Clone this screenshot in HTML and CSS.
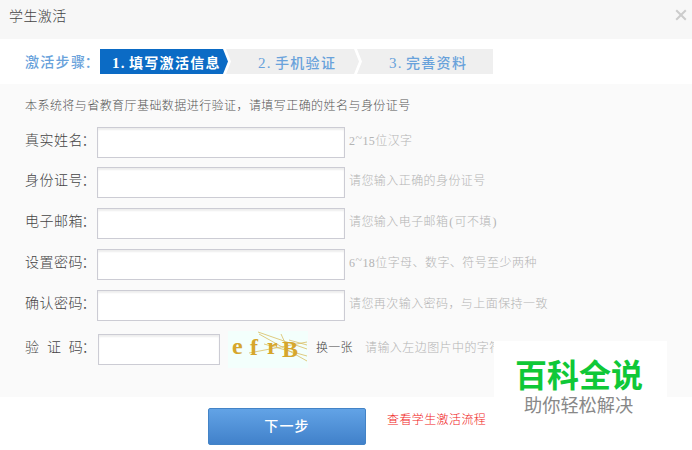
FILE: index.html
```html
<!DOCTYPE html>
<html lang="zh-CN">
<head>
  <meta charset="UTF-8" />
  <title>学生激活</title>
  <link rel="stylesheet" href="styles.css">
</head>
<body>

  <div class="header">
    <span class="title">学生激活</span>
    <svg class="close" width="12" height="12" viewBox="0 0 12 12"><path d="M1.2 1.2L10.8 10.8M10.8 1.2L1.2 10.8" /></svg>
  </div>

  <!-- 步骤 -->
  <div class="steps">
    <span class="steps-label">激活步骤<span class="colon">：</span></span>
    <div class="step step-active"><span class="num">1.</span>填写激活信息</div>
    <div class="step step-second"><span class="num">2.</span>手机验证</div>
    <div class="step step-last"><span class="num">3.</span>完善资料</div>
  </div>

  <!-- 表单 -->
  <form class="form">
    <p class="note">本系统将与省教育厅基础数据进行验证，请填写正确的姓名与身份证号</p>
    <div class="row">
      <label for="name">真实姓名<span class="colon">：</span></label>
      <input id="name" type="text" />
      <span class="hint">2<span class="tilde">~</span>15位汉字</span>
    </div>
    <div class="row">
      <label for="idcard">身份证号<span class="colon">：</span></label>
      <input id="idcard" type="text" />
      <span class="hint">请您输入正确的身份证号</span>
    </div>
    <div class="row">
      <label for="email">电子邮箱<span class="colon">：</span></label>
      <input id="email" type="text" />
      <span class="hint">请您输入电子邮箱<span class="paren">(</span>可不填<span class="paren">)</span></span>
    </div>
    <div class="row">
      <label for="pwd">设置密码<span class="colon">：</span></label>
      <input id="pwd" type="password" />
      <span class="hint">6<span class="tilde">~</span>18位字母、数字、符号至少两种</span>
    </div>
    <div class="row">
      <label for="pwd2">确认密码<span class="colon">：</span></label>
      <input id="pwd2" type="password" />
      <span class="hint">请您再次输入密码，与上面保持一致</span>
    </div>
    <div class="row row-code">
      <label for="code">验 证 码<span class="colon">：</span></label>
      <input id="code" type="text" />
      <svg class="captcha" width="80" height="37" viewBox="0 0 80 37">
        <rect width="80" height="37" fill="#f3fffc" />
        <path class="captcha-line" d="M30 1L79 18M31 3L79 30M53 3L58 14M21 22L79 11M36 13L79 25M61 9L79 14" />
        <g class="captcha-text">
          <text x="4" y="23">e</text>
          <text x="22" y="24">f</text>
          <text x="39" y="23">r</text>
          <text x="54" y="26">B</text>
        </g>
      </svg>
      <span class="change">换一张</span>
      <span class="hint">请输入左边图片中的字符</span>
    </div>
  </form>

  <div class="footer">
    <button class="next" type="button">下一步</button>
    <a class="flow">查看学生激活流程</a>
  </div>

  <div class="badge">
    <div class="badge-name">百科全说</div>
    <div class="badge-sub">助你轻松解决</div>
  </div>

</body>
</html>
```
FILE: styles.css
```css
* {
  box-sizing: border-box;
}

body {
  margin: 0;
  width: 692px;
  height: 450px;
  overflow: hidden;
  position: relative;
  background: #fff;
  color: #444;
  font-family: "Liberation Serif", "Noto Sans CJK SC", serif;
  font-size: 12px;
  font-weight: 300;
}

.header {
  display: flex;
  justify-content: space-between;
  height: 39px;
  padding: 6px 5px 0 9px;
  background: #f7f7f7;
}

.title {
  font-size: 14px;
  letter-spacing: 0.4px;
  line-height: 22px;
}

.close {
  margin-top: 3px;
  fill: none;
  stroke: #ccc;
  stroke-width: 2;
}

/* 步骤条 */
.steps {
  display: flex;
  height: 45px;
  padding: 10px 0 0 25px;
  color: #69a2db;
  font-size: 14px;
  font-weight: bold;
  letter-spacing: 1.3px;
  line-height: 28px;
}

.steps-label {
  width: 75px;
  white-space: nowrap;
  font-weight: 500;
}

.colon {
  margin-left: -1.5px;
}

.step {
  height: 25px;
  background: #efefef;
  white-space: nowrap;
}

.num {
  display: inline-block;
  width: 17px;
  font-size: 15px;
}

.step-active {
  width: 128px;
  padding-left: 12px;
  background: #0b6bc5;
  color: #fff;
  clip-path: polygon(0 0, 123px 0, 128px 50%, 123px 100%, 0 100%);
}

.step-second {
  width: 133px;
  margin-left: -2px;
  padding-left: 32px;
  font-weight: 500;
  clip-path: polygon(0 0, 128px 0, 133px 50%, 128px 100%, 0 100%, 5px 50%);
}

.step-last {
  width: 136px;
  margin-left: -2px;
  padding-left: 32px;
  font-weight: 500;
  clip-path: polygon(0 0, 100% 0, 100% 100%, 0 100%, 5px 50%);
}

/* 表单 */
.form {
  height: 313px;
  padding: 12px 0 0 25px;
  background: #fafafa;
}

.note {
  height: 30.6px;
  margin: 0;
  color: #555;
  letter-spacing: 0.44px;
  line-height: 21px;
}

.row {
  display: flex;
  height: 30.8px;
  margin-bottom: 10px;
}

.row label {
  width: 72px;
  font-size: 14px;
  letter-spacing: 0.5px;
  line-height: 28px;
  white-space: nowrap;
}

.row input {
  width: 248px;
  height: 31px;
  border: 1px solid #ccccd4;
  background: #fff;
  box-shadow: inset 0 2px 2px #eee;
}

.hint {
  margin-left: 4px;
  color: #b4b4b4;
  letter-spacing: 0.43px;
  line-height: 29px;
  white-space: nowrap;
}

.tilde {
  position: relative;
  top: -3px;
}

.paren {
  display: inline-block;
  width: 6px;
  text-align: center;
}

.row-code {
  margin-top: 13.4px;
}

.row-code label {
  width: 73px;
  word-spacing: 3.4px;
}

.row-code input {
  width: 122px;
}

.captcha {
  margin: -3px 0 0 8px;
}

.captcha-text {
  fill: #d6a62c;
  font-family: "Liberation Serif", serif;
  font-size: 24px;
  font-weight: bold;
}

.captcha-line {
  fill: none;
  stroke: #d9bd60;
  stroke-width: 0.8;
}

.change {
  width: 45px;
  margin-left: 8px;
  letter-spacing: 0.3px;
  line-height: 29px;
}

/* 底部 */
.footer {
  display: flex;
  height: 53px;
  padding: 11px 0 0 208px;
}

.next {
  width: 158px;
  height: 37px;
  padding: 0;
  border: 1px solid #4383c6;
  border-radius: 2px;
  background: linear-gradient(#62a3e6, #4181ca);
  color: #fff;
  font-family: inherit;
  font-size: 14px;
  font-weight: 500;
  letter-spacing: 1.2px;
  line-height: 35px;
}

.flow {
  margin-left: 21px;
  color: #f01818;
  letter-spacing: 0.4px;
  line-height: 24px;
}

/* 右下角标 */
.badge {
  position: absolute;
  left: 494px;
  top: 341px;
  width: 173px;
  height: 90px;
  background: #fff;
  font-family: "Noto Sans CJK SC", sans-serif;
  white-space: nowrap;
}

.badge-name {
  padding: 11px 0 0 21px;
  color: #0fc837;
  font-size: 32px;
  font-weight: bold;
  line-height: 42px;
}

.badge-sub {
  padding: 1px 0 0 30px;
  color: #888;
  font-size: 18.2px;
  font-weight: 400;
  line-height: 19px;
}
```
